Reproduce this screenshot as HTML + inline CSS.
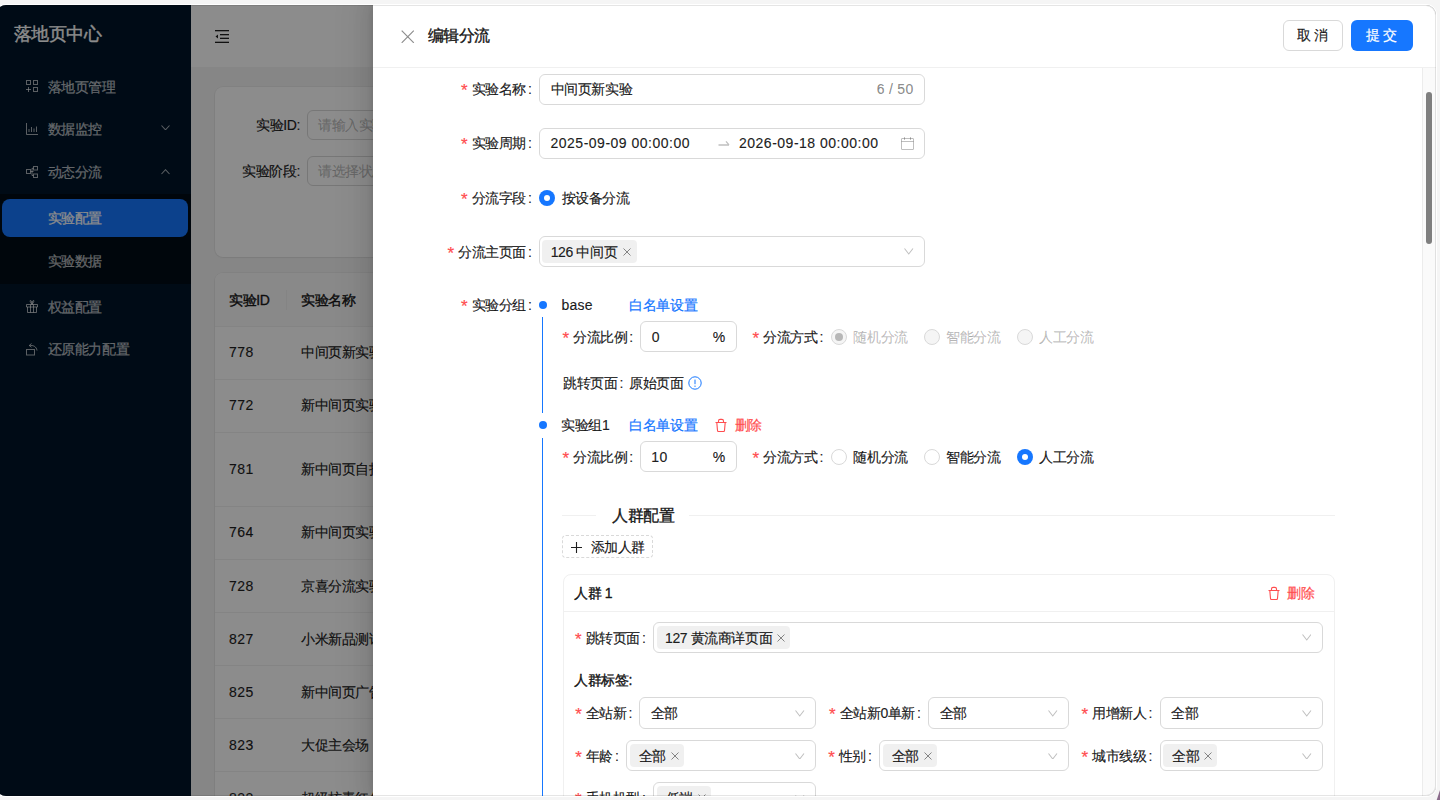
<!DOCTYPE html><html><head><meta charset="utf-8"><style>
*{box-sizing:border-box;margin:0;padding:0}
html,body{width:1440px;height:800px;overflow:hidden;background:#f5f5f5;font-family:"Liberation Sans",sans-serif;font-size:14px;letter-spacing:-0.4px;color:rgba(0,0,0,0.88)}
#win{position:absolute;left:-4px;top:5px;width:1440.3px;height:791px;border-radius:10px;overflow:hidden;background:#fff;box-shadow:0 0 0 1px #fff}
#ring{position:absolute;left:-4px;top:5px;width:1440.3px;height:791px;border-radius:10px;box-shadow:inset 0 0 0 1px rgba(0,0,0,0.1)}
#pg{position:absolute;left:4px;top:-5px;width:1440px;height:800px}
#pg div,#pg svg{position:absolute}
.t{line-height:20px;white-space:nowrap;-webkit-text-stroke:0.2px currentColor}
.st{color:rgba(255,255,255,0.65);line-height:20px;white-space:nowrap;-webkit-text-stroke:0.25px currentColor}
.ph{color:rgba(0,0,0,0.25)}
.bold{-webkit-text-stroke:0.4px currentColor}
.req{color:#ff4d4f;display:inline-block;width:10.5px;text-align:left;font-size:17px;line-height:14px;vertical-align:-2px}
.c{font-style:normal;margin-left:2px}
.n{letter-spacing:0.5px;font-size:14px}
.link{color:#1677ff}
.del{color:#ff4d4f}
.dis{color:rgba(0,0,0,0.25)}
</style></head><body><div id="win"><div id="pg">
<div style="left:0px;top:0px;width:191px;height:800px;background:#001529"></div>
<div style="left:0px;top:193.5px;width:191px;height:90.0px;background:#000c17"></div>
<div class="st" style="left:14px;top:22.0px;line-height:24px;color:#fff;font-size:18px;letter-spacing:-0.6px;-webkit-text-stroke:0.35px #fff">落地页中心</div>
<svg style="left:26px;top:80px" width="12" height="13" viewBox="0 0 12 13" fill="none" stroke="rgba(255,255,255,0.65)" stroke-width="1"><rect x="0.5" y="0.5" width="4" height="4"/><rect x="7.5" y="0.5" width="4" height="4"/><rect x="7.5" y="7.5" width="4" height="4"/><path d="M2.5 7v5M0 9.5h5"/></svg>
<div class="st" style="left:47.5px;top:76.5px;line-height:20px;">落地页管理</div>
<svg style="left:26px;top:123px" width="12" height="12" viewBox="0 0 12 12" fill="none" stroke="rgba(255,255,255,0.65)" stroke-width="1"><path d="M0.5 0v11.5H12M3 9V6M5.5 9V4M8 9V5.5M10.5 9V3.5"/></svg>
<div class="st" style="left:47.5px;top:119.0px;line-height:20px;">数据监控</div>
<svg style="left:161px;top:124.8px" width="9" height="5.5" viewBox="0 0 9 5.5" fill="none" stroke="rgba(255,255,255,0.65)" stroke-width="1.05"><path d="M0.5 0.5L4.5 4.8L8.5 0.5"/></svg>
<svg style="left:26px;top:166px" width="12" height="12" viewBox="0 0 12 12" fill="none" stroke="rgba(255,255,255,0.65)" stroke-width="1"><rect x="0.5" y="3.5" width="4" height="4"/><rect x="7.5" y="0.5" width="4" height="3.5"/><rect x="7.5" y="8" width="4" height="3.5"/><path d="M4.5 5.5h3M6 2.3v7.2h1.5M6 2.3h1.5"/></svg>
<div class="st" style="left:47.5px;top:162.0px;line-height:20px;">动态分流</div>
<svg style="left:161px;top:169px" width="9" height="5.5" viewBox="0 0 9 5.5" fill="none" stroke="rgba(255,255,255,0.65)" stroke-width="1.05"><path d="M0.5 5.0L4.5 0.7L8.5 5.0"/></svg>
<div style="left:2.2px;top:198.7px;width:185.5px;height:38.30000000000001px;border-radius:8px;background:#1677ff"></div>
<div class="st" style="left:47.5px;top:208.0px;line-height:20px;color:#fff">实验配置</div>
<div class="st" style="left:47.5px;top:250.60000000000002px;line-height:20px;">实验数据</div>
<svg style="left:26px;top:299px" width="12" height="14" viewBox="0 0 12 14" fill="none" stroke="rgba(255,255,255,0.65)" stroke-width="1"><path d="M0.5 5.5h11v2.5h-11z M1.5 8v5.5h9V8 M4.5 5.5v8 M7.5 5.5v8 M6 5.5C4.5 3.5 3.5 1.5 4.5 1.5S6 3.5 6 5.5C6 3.5 6.5 1.5 7.5 1.5S7.5 3.5 6 5.5"/></svg>
<div class="st" style="left:47.5px;top:297.0px;line-height:20px;">权益配置</div>
<svg style="left:25px;top:342px" width="14" height="14" viewBox="0 0 14 14" fill="none" stroke="rgba(255,255,255,0.65)" stroke-width="1"><rect x="1.5" y="7.5" width="8" height="5.5"/><path d="M4.5 3.5C8 3 11.5 4.5 12 8.5"/><path d="M6.5 1.5L4.2 3.5 6.5 5.3"/></svg>
<div class="st" style="left:47.5px;top:339.0px;line-height:20px;">还原能力配置</div>
<div style="left:191px;top:0px;width:1249px;height:800px;background:#f5f5f5"></div>
<div style="left:191px;top:0px;width:1249px;height:67px;background:#fff"></div>
<svg style="left:215px;top:29.7px" width="15" height="13" viewBox="0 0 15 13" fill="rgba(0,0,0,0.88)"><rect x="0" y="0" width="14" height="1.3"/><rect x="0" y="11.7" width="14" height="1.3"/><rect x="5" y="4" width="9" height="1.3"/><rect x="5" y="7.7" width="9" height="1.3"/><path d="M0.5 6.5L3 4.5v4z"/></svg>
<div style="left:215px;top:87px;width:1205px;height:170px;background:#fff;border-radius:8px;box-shadow:0 0 0 1px rgba(0,0,0,0.04),0 1px 2px rgba(0,0,0,0.05)"></div>
<div class="t" style="right:1140px;top:115.0px;line-height:20px;text-align:right;">实验ID:</div>
<div style="left:307px;top:110px;width:253px;height:30px;border:1px solid #d9d9d9;border-radius:6px;background:#fff"></div>
<div class="t ph" style="left:318px;top:115.0px;line-height:20px;">请输入实验ID</div>
<div class="t" style="right:1140px;top:161.0px;line-height:20px;text-align:right;">实验阶段:</div>
<div style="left:307px;top:156px;width:253px;height:30px;border:1px solid #d9d9d9;border-radius:6px;background:#fff"></div>
<div class="t ph" style="left:318px;top:161.0px;line-height:20px;">请选择状态</div>
<div style="left:215px;top:273px;width:1205px;height:627px;background:#fff;border-radius:8px;box-shadow:0 0 0 1px rgba(0,0,0,0.04),0 1px 2px rgba(0,0,0,0.05)"></div>
<div style="left:215px;top:273px;width:1205px;height:53px;background:#fafafa;border-radius:8px 8px 0 0"></div>
<div class="t bold" style="left:229px;top:289.5px;line-height:20px;">实验ID</div>
<div style="left:286px;top:290px;width:1px;height:20px;background:#f0f0f0"></div>
<div class="t bold" style="left:301px;top:289.5px;line-height:20px;">实验名称</div>
<div style="left:215px;top:326px;width:1205px;height:1px;background:#f0f0f0"></div>
<div class="t" style="left:229px;top:342.0px;line-height:20px;"><span class="n">778</span></div>
<div class="t" style="left:301px;top:342.0px;line-height:20px;">中间页新实验</div>
<div style="left:215px;top:379px;width:1205px;height:1px;background:#f0f0f0"></div>
<div class="t" style="left:229px;top:395.0px;line-height:20px;"><span class="n">772</span></div>
<div class="t" style="left:301px;top:395.0px;line-height:20px;">新中间页实验</div>
<div style="left:215px;top:432px;width:1205px;height:1px;background:#f0f0f0"></div>
<div class="t" style="left:229px;top:459.0px;line-height:20px;"><span class="n">781</span></div>
<div class="t" style="left:301px;top:459.0px;line-height:20px;">新中间页自投</div>
<div style="left:215px;top:506px;width:1205px;height:1px;background:#f0f0f0"></div>
<div class="t" style="left:229px;top:522.0px;line-height:20px;"><span class="n">764</span></div>
<div class="t" style="left:301px;top:522.0px;line-height:20px;">新中间页实验</div>
<div style="left:215px;top:559px;width:1205px;height:1px;background:#f0f0f0"></div>
<div class="t" style="left:229px;top:576.0px;line-height:20px;"><span class="n">728</span></div>
<div class="t" style="left:301px;top:576.0px;line-height:20px;">京喜分流实验</div>
<div style="left:215px;top:612px;width:1205px;height:1px;background:#f0f0f0"></div>
<div class="t" style="left:229px;top:629.0px;line-height:20px;"><span class="n">827</span></div>
<div class="t" style="left:301px;top:629.0px;line-height:20px;">小米新品测试</div>
<div style="left:215px;top:665px;width:1205px;height:1px;background:#f0f0f0"></div>
<div class="t" style="left:229px;top:682.0px;line-height:20px;"><span class="n">825</span></div>
<div class="t" style="left:301px;top:682.0px;line-height:20px;">新中间页广告</div>
<div style="left:215px;top:718px;width:1205px;height:1px;background:#f0f0f0"></div>
<div class="t" style="left:229px;top:735.0px;line-height:20px;"><span class="n">823</span></div>
<div class="t" style="left:301px;top:735.0px;line-height:20px;">大促主会场</div>
<div style="left:215px;top:771px;width:1205px;height:1px;background:#f0f0f0"></div>
<div class="t" style="left:229px;top:788.0px;line-height:20px;"><span class="n">822</span></div>
<div class="t" style="left:301px;top:788.0px;line-height:20px;">超级核毒红包</div>
<div style="left:215px;top:824px;width:1205px;height:1px;background:#f0f0f0"></div>
<div style="left:0px;top:0px;width:1440px;height:800px;background:rgba(0,0,0,0.45)"></div>
<div style="left:373px;top:0px;width:1067px;height:800px;background:#fff;box-shadow:-6px 0 16px 0 rgba(0,0,0,0.08),-3px 0 6px -4px rgba(0,0,0,0.12),-9px 0 28px 8px rgba(0,0,0,0.05)"></div>
<div style="left:373px;top:67px;width:1067px;height:1px;background:#f0f0f0"></div>
<svg style="left:401px;top:29.5px" width="13.5" height="13.5" viewBox="0 0 13.5 13.5" stroke="rgba(0,0,0,0.45)" stroke-width="1.2"><path d="M0.7 0.7l12.1 12.1M12.8 0.7L0.7 12.8"/></svg>
<div class="t bold" style="left:427.5px;top:25.0px;line-height:22px;font-size:16px">编辑分流</div>
<div style="left:1282.5px;top:20.2px;width:60.5px;height:30.500000000000004px;border:1px solid #d9d9d9;border-radius:6px;background:#fff"></div>
<div class="t" style="left:1282.5px;width:60.5px;top:24.5px;text-align:center;letter-spacing:3px;text-indent:3px">取消</div>
<div style="left:1351px;top:20.2px;width:61.59999999999991px;height:30.500000000000004px;border-radius:6px;background:#1677ff"></div>
<div class="t" style="left:1351px;width:61.6px;top:24.5px;text-align:center;letter-spacing:3px;text-indent:3px;color:#fff">提交</div>
<div style="left:1422px;top:68px;width:18px;height:732px;background:#fafafa;border-left:1px solid #ececec"></div>
<div style="left:1425.75px;top:92px;width:6.25px;height:152px;border-radius:3px;background:#7f7f7f"></div>
<div class="t" style="right:908.5px;top:79.4px;line-height:20px;text-align:right;"><span class="req">*</span>实验名称<i class="c">:</i></div>
<div style="left:539px;top:74px;width:386px;height:31px;border:1px solid #d9d9d9;border-radius:6px;background:#fff"></div>
<div class="t" style="left:550.5px;top:79.4px;line-height:20px;">中间页新实验</div>
<div class="t" style="right:526.5px;top:79.4px;line-height:20px;text-align:right;color:rgba(0,0,0,0.45)"><span class="n" style="letter-spacing:0.3px">6 / 50</span></div>
<div class="t" style="right:908.5px;top:133.4px;line-height:20px;text-align:right;"><span class="req">*</span>实验周期<i class="c">:</i></div>
<div style="left:539px;top:128px;width:386px;height:31px;border:1px solid #d9d9d9;border-radius:6px;background:#fff"></div>
<div class="t" style="left:550.5px;top:133.4px;line-height:20px;"><span class="n">2025-09-09 00:00:00</span></div>
<svg style="left:717.5px;top:140px" width="12" height="7" viewBox="0 0 12 7" fill="none" stroke="rgba(0,0,0,0.25)" stroke-width="1.3"><path d="M0.5 5h10.5M8 1.3l3 3.5"/></svg>
<div class="t" style="left:739px;top:133.4px;line-height:20px;"><span class="n">2026-09-18 00:00:00</span></div>
<svg style="left:901px;top:137px" width="13" height="13" viewBox="0 0 13 13" fill="none" stroke="rgba(0,0,0,0.25)" stroke-width="1"><rect x="0.5" y="1.5" width="12" height="11" rx="0.5"/><path d="M0.5 4.5h12M3.5 0v3M9.5 0v3"/></svg>
<div class="t" style="right:908.5px;top:187.6px;line-height:20px;text-align:right;"><span class="req">*</span>分流字段<i class="c">:</i></div>
<div style="left:538.5px;top:189.6px;width:16.0px;height:16.0px;border-radius:50%;background:#1677ff"></div>
<div style="left:543.5px;top:194.6px;width:6.0px;height:6.0px;border-radius:50%;background:#fff"></div>
<div class="t" style="left:561.6px;top:187.6px;line-height:20px;">按设备分流</div>
<div class="t" style="right:908.5px;top:241.5px;line-height:20px;text-align:right;"><span class="req">*</span>分流主页面<i class="c">:</i></div>
<div style="left:539px;top:236px;width:386px;height:31px;border:1px solid #d9d9d9;border-radius:6px;background:#fff"></div>
<div style="left:542px;top:240px;width:95px;height:23px;background:rgba(0,0,0,0.06);border-radius:4px"></div>
<div class="t" style="left:550.7px;top:241.5px;line-height:20px;">126 中间页</div>
<svg style="left:623px;top:247.5px" width="8" height="8" viewBox="0 0 8 8" stroke="rgba(0,0,0,0.45)" stroke-width="1"><path d="M0.5 0.5L7.5 7.5M7.5 0.5L0.5 7.5"/></svg>
<svg style="left:904.2px;top:248px" width="9.5" height="6.7" viewBox="0 0 9.5 6.7" fill="none" stroke="rgba(0,0,0,0.25)" stroke-width="1.05"><path d="M0.5 0.5L4.75 6.0L9.0 0.5"/></svg>
<div class="t" style="right:908.5px;top:295.3px;line-height:20px;text-align:right;"><span class="req">*</span>实验分组<i class="c">:</i></div>
<div style="left:538.6px;top:301.3px;width:8.0px;height:8.0px;border-radius:50%;background:#1677ff"></div>
<div style="left:541.8px;top:317px;width:1.6000000000000227px;height:96px;background:#1677ff"></div>
<div style="left:538.6px;top:421px;width:8.0px;height:8px;border-radius:50%;background:#1677ff"></div>
<div style="left:541.8px;top:437.8px;width:1.6000000000000227px;height:362.2px;background:#1677ff"></div>
<div class="t" style="left:561.5px;top:295.3px;line-height:20px;"><span class="n" style="letter-spacing:0.2px">base</span></div>
<div class="t link" style="left:629.2px;top:295.3px;line-height:20px;">白名单设置</div>
<div class="t" style="right:807.2px;top:326.5px;line-height:20px;text-align:right;"><span class="req">*</span>分流比例<i class="c">:</i></div>
<div style="left:640px;top:321px;width:97px;height:31px;border:1px solid #d9d9d9;border-radius:6px;background:#fff"></div>
<div class="t" style="left:651.7px;top:326.5px;line-height:20px;"><span class="n">0</span></div>
<div class="t" style="left:712.8px;top:326.5px;line-height:20px;"><span class="n">%</span></div>
<div class="t" style="right:617px;top:326.5px;line-height:20px;text-align:right;"><span class="req">*</span>分流方式<i class="c">:</i></div>
<div style="left:831px;top:328.5px;width:16px;height:16.0px;border-radius:50%;border:1px solid #d9d9d9;background:#f5f5f5"></div>
<div style="left:835px;top:332.5px;width:8px;height:8.0px;border-radius:50%;background:rgba(0,0,0,0.25)"></div>
<div class="t dis" style="left:853.4px;top:326.5px;line-height:20px;">随机分流</div>
<div style="left:923.7px;top:328.5px;width:16.0px;height:16.0px;border-radius:50%;border:1px solid #d9d9d9;background:#f5f5f5"></div>
<div class="t dis" style="left:946px;top:326.5px;line-height:20px;">智能分流</div>
<div style="left:1016.7px;top:328.5px;width:16.0px;height:16.0px;border-radius:50%;border:1px solid #d9d9d9;background:#f5f5f5"></div>
<div class="t dis" style="left:1039px;top:326.5px;line-height:20px;">人工分流</div>
<div class="t" style="right:817px;top:373.0px;line-height:20px;text-align:right;">跳转页面<i class="c">:</i></div>
<div class="t" style="left:629px;top:373.0px;line-height:20px;">原始页面</div>
<svg style="left:687.5px;top:376px" width="14" height="14" viewBox="0 0 14 14" fill="none" stroke="#1677ff" stroke-width="1"><circle cx="7" cy="7" r="6.2"/><path d="M7 3.6v4.6M7 9.6v1.3"/></svg>
<div class="t" style="left:561.3px;top:415.0px;line-height:20px;">实验组<span class="n">1</span></div>
<div class="t link" style="left:629.2px;top:415.0px;line-height:20px;">白名单设置</div>
<svg style="left:714.5px;top:418px" width="12" height="14" viewBox="0 0 12 14" fill="none" stroke="#ff4d4f" stroke-width="1.1"><path d="M0.5 4.5h11M3.5 4.5V3a1.6 1.6 0 0 1 1.6-1.6h1.8A1.6 1.6 0 0 1 8.5 3v1.5M1.8 4.5l0.7 8a1 1 0 0 0 1 1h5a1 1 0 0 0 1-1l0.7-8"/></svg>
<div class="t del" style="left:734.7px;top:415.0px;line-height:20px;">删除</div>
<div class="t" style="right:807.2px;top:446.5px;line-height:20px;text-align:right;"><span class="req">*</span>分流比例<i class="c">:</i></div>
<div style="left:640px;top:441px;width:97px;height:31px;border:1px solid #d9d9d9;border-radius:6px;background:#fff"></div>
<div class="t" style="left:651.3px;top:446.5px;line-height:20px;"><span class="n">10</span></div>
<div class="t" style="left:712.8px;top:446.5px;line-height:20px;"><span class="n">%</span></div>
<div class="t" style="right:617px;top:446.5px;line-height:20px;text-align:right;"><span class="req">*</span>分流方式<i class="c">:</i></div>
<div style="left:831px;top:448.5px;width:16px;height:16.0px;border-radius:50%;border:1px solid #d9d9d9;background:#fff"></div>
<div class="t" style="left:853.4px;top:446.5px;line-height:20px;">随机分流</div>
<div style="left:923.7px;top:448.5px;width:16.0px;height:16.0px;border-radius:50%;border:1px solid #d9d9d9;background:#fff"></div>
<div class="t" style="left:946px;top:446.5px;line-height:20px;">智能分流</div>
<div style="left:1016.7px;top:448.5px;width:16.0px;height:16.0px;border-radius:50%;background:#1677ff"></div>
<div style="left:1021.7px;top:453.5px;width:6.0px;height:6.0px;border-radius:50%;background:#fff"></div>
<div class="t" style="left:1039px;top:446.5px;line-height:20px;">人工分流</div>
<div style="left:562px;top:515px;width:34px;height:1px;background:#f0f0f0"></div>
<div style="left:689px;top:515px;width:646.4000000000001px;height:1px;background:#f0f0f0"></div>
<div class="t bold" style="left:612px;top:504.5px;line-height:22px;font-size:16px">人群配置</div>
<div style="left:562.3px;top:535px;width:90.30000000000007px;height:23.299999999999955px;border:1px dashed #d9d9d9;border-radius:4px;background:#fff"></div>
<svg style="left:571px;top:541.5px" width="11" height="11" viewBox="0 0 11 11" stroke="rgba(0,0,0,0.88)" stroke-width="1.1"><path d="M5.5 0v11M0 5.5h11"/></svg>
<div class="t" style="left:590.5px;top:537.0px;line-height:20px;">添加人群</div>
<div style="left:562.8px;top:574px;width:772.6000000000001px;height:426px;border:1px solid #f0f0f0;border-radius:8px;background:#fff"></div>
<div style="left:563.5px;top:611px;width:771.0px;height:1px;background:#f0f0f0"></div>
<div class="t bold" style="left:574px;top:582.8px;line-height:20px;">人群 <span class="n">1</span></div>
<svg style="left:1267.5px;top:585.5px" width="12" height="14" viewBox="0 0 12 14" fill="none" stroke="#ff4d4f" stroke-width="1.1"><path d="M0.5 4.5h11M3.5 4.5V3a1.6 1.6 0 0 1 1.6-1.6h1.8A1.6 1.6 0 0 1 8.5 3v1.5M1.8 4.5l0.7 8a1 1 0 0 0 1 1h5a1 1 0 0 0 1-1l0.7-8"/></svg>
<div class="t del" style="left:1287px;top:582.7px;line-height:20px;">删除</div>
<div class="t" style="right:794.5px;top:627.5px;line-height:20px;text-align:right;"><span class="req">*</span>跳转页面<i class="c">:</i></div>
<div style="left:653px;top:622px;width:670px;height:31px;border:1px solid #d9d9d9;border-radius:6px;background:#fff"></div>
<div style="left:657px;top:626px;width:133px;height:23px;background:rgba(0,0,0,0.06);border-radius:4px"></div>
<div class="t" style="left:665px;top:627.5px;line-height:20px;">127 黄流商详页面</div>
<svg style="left:777px;top:633.5px" width="8" height="8" viewBox="0 0 8 8" stroke="rgba(0,0,0,0.45)" stroke-width="1"><path d="M0.5 0.5L7.5 7.5M7.5 0.5L0.5 7.5"/></svg>
<svg style="left:1301.7px;top:634.3px" width="9.5" height="6.7" viewBox="0 0 9.5 6.7" fill="none" stroke="rgba(0,0,0,0.25)" stroke-width="1.05"><path d="M0.5 0.5L4.75 6.0L9.0 0.5"/></svg>
<div class="t bold" style="left:574px;top:669.6px;line-height:20px;">人群标签:</div>
<div class="t" style="right:808px;top:703.0px;line-height:20px;text-align:right;"><span class="req">*</span>全站新<i class="c">:</i></div>
<div style="left:639px;top:697px;width:177px;height:32px;border:1px solid #d9d9d9;border-radius:6px;background:#fff"></div>
<div class="t" style="left:650.6px;top:703.0px;line-height:20px;">全部</div>
<svg style="left:795.1px;top:710.0px" width="9.5" height="6.7" viewBox="0 0 9.5 6.7" fill="none" stroke="rgba(0,0,0,0.25)" stroke-width="1.05"><path d="M0.5 0.5L4.75 6.0L9.0 0.5"/></svg>
<div class="t" style="right:519.5px;top:703.0px;line-height:20px;text-align:right;"><span class="req">*</span>全站新0单新<i class="c">:</i></div>
<div style="left:928px;top:697px;width:141px;height:32px;border:1px solid #d9d9d9;border-radius:6px;background:#fff"></div>
<div class="t" style="left:939.8px;top:703.0px;line-height:20px;">全部</div>
<svg style="left:1048.2px;top:710.0px" width="9.5" height="6.7" viewBox="0 0 9.5 6.7" fill="none" stroke="rgba(0,0,0,0.25)" stroke-width="1.05"><path d="M0.5 0.5L4.75 6.0L9.0 0.5"/></svg>
<div class="t" style="right:288px;top:703.0px;line-height:20px;text-align:right;"><span class="req">*</span>用增新人<i class="c">:</i></div>
<div style="left:1160px;top:697px;width:163px;height:32px;border:1px solid #d9d9d9;border-radius:6px;background:#fff"></div>
<div class="t" style="left:1171px;top:703.0px;line-height:20px;">全部</div>
<svg style="left:1302.0px;top:710.0px" width="9.5" height="6.7" viewBox="0 0 9.5 6.7" fill="none" stroke="rgba(0,0,0,0.25)" stroke-width="1.05"><path d="M0.5 0.5L4.75 6.0L9.0 0.5"/></svg>
<div class="t" style="right:821.5px;top:745.6px;line-height:20px;text-align:right;"><span class="req">*</span>年龄<i class="c">:</i></div>
<div style="left:626px;top:740px;width:190px;height:31px;border:1px solid #d9d9d9;border-radius:6px;background:#fff"></div>
<div style="left:630px;top:744px;width:54px;height:23px;background:rgba(0,0,0,0.06);border-radius:4px"></div>
<div class="t" style="left:638.5px;top:745.6px;line-height:20px;">全部</div>
<svg style="left:670.5px;top:751.6px" width="8" height="8" viewBox="0 0 8 8" stroke="rgba(0,0,0,0.45)" stroke-width="1"><path d="M0.5 0.5L7.5 7.5M7.5 0.5L0.5 7.5"/></svg>
<svg style="left:795.1px;top:752.6px" width="9.5" height="6.7" viewBox="0 0 9.5 6.7" fill="none" stroke="rgba(0,0,0,0.25)" stroke-width="1.05"><path d="M0.5 0.5L4.75 6.0L9.0 0.5"/></svg>
<div class="t" style="right:568.5px;top:745.6px;line-height:20px;text-align:right;"><span class="req">*</span>性别<i class="c">:</i></div>
<div style="left:879px;top:740px;width:190px;height:31px;border:1px solid #d9d9d9;border-radius:6px;background:#fff"></div>
<div style="left:883px;top:744px;width:54px;height:23px;background:rgba(0,0,0,0.06);border-radius:4px"></div>
<div class="t" style="left:891.6px;top:745.6px;line-height:20px;">全部</div>
<svg style="left:923.6px;top:751.6px" width="8" height="8" viewBox="0 0 8 8" stroke="rgba(0,0,0,0.45)" stroke-width="1"><path d="M0.5 0.5L7.5 7.5M7.5 0.5L0.5 7.5"/></svg>
<svg style="left:1048.2px;top:752.6px" width="9.5" height="6.7" viewBox="0 0 9.5 6.7" fill="none" stroke="rgba(0,0,0,0.25)" stroke-width="1.05"><path d="M0.5 0.5L4.75 6.0L9.0 0.5"/></svg>
<div class="t" style="right:288px;top:745.6px;line-height:20px;text-align:right;"><span class="req">*</span>城市线级<i class="c">:</i></div>
<div style="left:1160px;top:740px;width:163px;height:31px;border:1px solid #d9d9d9;border-radius:6px;background:#fff"></div>
<div style="left:1163px;top:744px;width:54px;height:23px;background:rgba(0,0,0,0.06);border-radius:4px"></div>
<div class="t" style="left:1172px;top:745.6px;line-height:20px;">全部</div>
<svg style="left:1204px;top:751.6px" width="8" height="8" viewBox="0 0 8 8" stroke="rgba(0,0,0,0.45)" stroke-width="1"><path d="M0.5 0.5L7.5 7.5M7.5 0.5L0.5 7.5"/></svg>
<svg style="left:1302.0px;top:752.6px" width="9.5" height="6.7" viewBox="0 0 9.5 6.7" fill="none" stroke="rgba(0,0,0,0.25)" stroke-width="1.05"><path d="M0.5 0.5L4.75 6.0L9.0 0.5"/></svg>
<div class="t" style="right:794.5px;top:788.0px;line-height:20px;text-align:right;"><span class="req">*</span>手机机型<i class="c">:</i></div>
<div style="left:653px;top:782px;width:163px;height:31px;border:1px solid #d9d9d9;border-radius:6px;background:#fff"></div>
<div style="left:657px;top:786px;width:54px;height:24px;background:rgba(0,0,0,0.06);border-radius:4px"></div>
<div class="t" style="left:665.5px;top:787.95px;line-height:20px;">低端</div>
<svg style="left:697.5px;top:793.95px" width="8" height="8" viewBox="0 0 8 8" stroke="rgba(0,0,0,0.45)" stroke-width="1"><path d="M0.5 0.5L7.5 7.5M7.5 0.5L0.5 7.5"/></svg>
<svg style="left:795.1px;top:794.95px" width="9.5" height="6.7" viewBox="0 0 9.5 6.7" fill="none" stroke="rgba(0,0,0,0.25)" stroke-width="1.05"><path d="M0.5 0.5L4.75 6.0L9.0 0.5"/></svg>
</div></div><div id="ring"></div>
<div style="position:absolute;left:1434px;top:790px;width:6px;height:10px;background:#8b6b8b;clip-path:polygon(100% 0,100% 100%,45% 100%)"></div>
</body></html>
